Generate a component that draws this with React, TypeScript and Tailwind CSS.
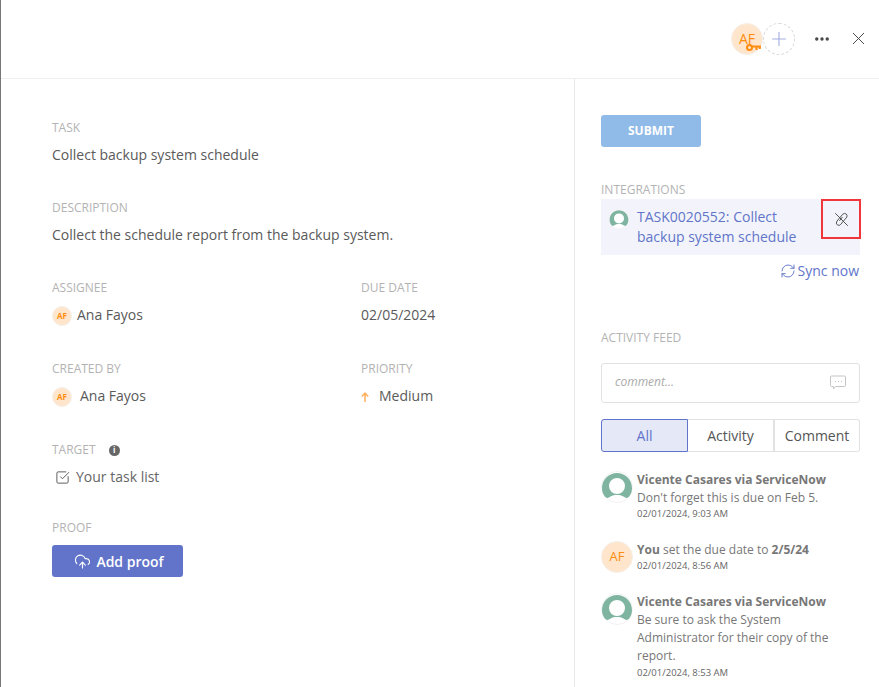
import { CloudUpload, MoreHorizontal, Plus, RefreshCw, SquareCheckBig, X } from 'lucide-react';
import type { ReactNode } from 'react';

function Label({ children }: { children: ReactNode }) {
  return <div className="h-4 text-[12px] leading-4 text-[#b3b3b3] uppercase">{children}</div>;
}

function Initials({ size }: { size: 'sm' | 'md' | 'lg' }) {
  const cls = {
    sm: 'mt-[1px] h-5 w-5 text-[8px] font-bold',
    md: 'h-8 w-8 text-[13px]',
    lg: 'h-8 w-8 text-[14px]',
  }[size];
  return (
    <div className={`flex shrink-0 items-center justify-center rounded-full border border-[#f5f0ea] bg-[#fee5cc] text-[#ff8c0f] ${cls}`}>
      AF
    </div>
  );
}

function SnowAvatar({ size }: { size: number }) {
  return (
    <svg width={size} height={size} viewBox="0 0 32 32" className="shrink-0">
      <circle cx="16" cy="16" r="15.5" fill="#fff" stroke="#f2f2f2" />
      <path
        fill="#7fb5a0"
        fillRule="evenodd"
        d="M16 2C8 2 1 8.500 1 17c0 3.500 1.100 6.300 3 8.800 1 1.300 3 1.500 4.300.5C10.500 24.600 13 24 16 24s5.500.6 7.700 2.300c1.300 1 3.300.8 4.300-.5 1.900-2.500 3-5.300 3-8.800C31 8.500 24 2 16 2zm0 21a8 8 0 1 1 0-16 8 8 0 0 1 0 16z"
      />
    </svg>
  );
}

function FeedItem({ avatar, children, time }: { avatar: ReactNode; children: ReactNode; time: string }) {
  return (
    <div className="flex gap-[4px]">
      {avatar}
      <div className="min-w-0">
        <div className="text-[12px] leading-[18.200px] text-[#777]">{children}</div>
        <div className="text-[9.500px] leading-[14px] text-[#666]">{time}</div>
      </div>
    </div>
  );
}

export default function App() {
  return (
    <div className="h-[687px] w-[879px] overflow-hidden border-l border-[#777] bg-white font-['Open_Sans',sans-serif] text-[#5a5a5a]">
      <header className="flex h-[79px] items-center border-b border-[#eee] pb-[1px] pl-[730px]">
        <div className="relative">
          <Initials size="lg" />
          <svg width="15" height="9" viewBox="0 0 15 9" className="absolute right-[2px] bottom-[3px]" fill="none" stroke="#ff8c0f" strokeWidth="2">
            <circle cx="3.500" cy="4.500" r="2.500" />
            <path d="M6 3.500h9M10.500 3.500V7M13.800 3.500V6" />
          </svg>
        </div>
        <div className="flex h-8 w-8 items-center justify-center rounded-full border border-dashed border-[#d9d9d9] bg-white">
          <Plus size={22} strokeWidth={1.200} className="text-[#a3acdf]" />
        </div>
        <MoreHorizontal size={18} strokeWidth={2.500} className="ml-[18px] text-[#444]" />
        <X size={21} strokeWidth={1.100} className="ml-[17px] text-[#444]" />
      </header>

      <div className="flex">
        <main className="h-[608px] w-[574px] border-r border-[#e8e8e8] pt-[41px] pl-[51px]">
          <Label>Task</Label>
          <div className="mt-[9px] h-[20px] text-[14px] leading-5">Collect backup system schedule</div>

          <div className="mt-[35px]">
            <Label>Description</Label>
            <div className="mt-[9px] h-[20px] text-[14px] leading-5">Collect the schedule report from the backup system.</div>
          </div>

          <div className="mt-[35px] grid grid-cols-[309px_1fr] gap-y-[36px]">
            <div className="h-[45px]">
              <Label>Assignee</Label>
              <div className="mt-[9px] flex h-[20px] items-center gap-[5px] text-[14px] leading-5">
                <Initials size="sm" />
                Ana Fayos
              </div>
            </div>
            <div className="h-[45px]">
              <Label>Due date</Label>
              <div className="mt-[9px] h-[20px] text-[14px] leading-5">02/05/2024</div>
            </div>
            <div className="h-[45px]">
              <Label>Created by</Label>
              <div className="mt-[9px] flex h-[20px] items-center gap-[8px] text-[14px] leading-5">
                <Initials size="sm" />
                Ana Fayos
              </div>
            </div>
            <div className="h-[45px]">
              <Label>Priority</Label>
              <div className="mt-[9px] flex h-[20px] items-center gap-[10px] text-[14px] leading-5">
                <svg width="8" height="10" viewBox="0 0 8 10" fill="none" stroke="#ffb05c" strokeWidth="1.500" className="mt-[2px]">
                  <path d="M4 10V1.500M.8 4.500 4 1.200l3.200 3.300" />
                </svg>
                Medium
              </div>
            </div>
          </div>

          <div className="mt-[36px]">
            <div className="flex items-center gap-[13px]">
              <Label>Target</Label>
              <div className="flex h-[11px] w-[11px] items-center justify-center rounded-full bg-[#666] text-[8px] leading-none font-bold text-white">i</div>
            </div>
            <div className="mt-[9px] flex h-[20px] items-center gap-[6px] pl-[3px] text-[14px] leading-5 text-[#666]">
              <SquareCheckBig size={15} strokeWidth={1.500} className="text-[#555]" />
              Your task list
            </div>
          </div>

          <div className="mt-[33px]">
            <Label>Proof</Label>
            <button className="mt-[9px] flex h-8 w-[131px] items-center justify-center gap-[5px] rounded-[3px] bg-[#6174c9] pl-[3px] text-[14px] font-semibold text-white">
              <CloudUpload size={17} strokeWidth={1.600} />
              Add proof
            </button>
          </div>
        </main>

        <aside className="w-[304px] pt-[36px] pl-[26px]">
          <button className="h-8 w-[100px] rounded-[3px] bg-[#90bae7] text-[12px] font-bold text-white">SUBMIT</button>

          <div className="mt-[35px] w-[259px]">
            <Label>Integrations</Label>
            <div className="relative mt-[1px] flex h-[56px] bg-[#f3f4fb] pt-[8px] pl-[8px]">
              <div className="pt-[2px]">
                <SnowAvatar size={20} />
              </div>
              <div className="ml-[8px] w-[180px] text-[14px] leading-5 text-[#6174c9]">TASK0020552: Collect backup system schedule</div>
              <div className="absolute top-0 right-[-1px] flex h-[40px] w-[40px] items-center justify-center border-2 border-[#f0353b]">
                <svg width="15" height="15" viewBox="0 0 15 15" fill="none" stroke="#555" strokeWidth="1" strokeLinecap="round">
                  <path d="M9 2a2.500 2.500 0 0 1 3.800 3.100L6.800 12.300a2.500 2.500 0 0 1-4-3z" />
                  <path d="M8.200 5.300 5.700 8.500" />
                  <path d="M1.500 1.500 13.500 13.500" />
                </svg>
              </div>
            </div>
            <div className="mt-[6px] flex h-5 items-center justify-end gap-[2px] pr-[1px] text-[14px] leading-5 text-[#6174c9]">
              <RefreshCw size={16} strokeWidth={1.400} />
              Sync now
            </div>
          </div>

          <div className="mt-[49px] w-[259px]">
            <Label>Activity feed</Label>
            <div className="mt-[17px] flex h-[40px] items-center justify-between rounded-[3px] border border-[#e2e2e2] pr-[13px] pb-[2px] pl-[13px]">
              <span className="text-[12px] text-[#aaa] italic">comment...</span>
              <svg width="16" height="15" viewBox="0 0 16 15" fill="none" stroke="#c4c4c4">
                <path d="M1.500 1h13a1 1 0 0 1 1 1v8.500a1 1 0 0 1-1 1h-9l-2 2.500v-2.500h-2a1 1 0 0 1-1-1V2a1 1 0 0 1 1-1z" />
                <path d="M5 6.500h1M8 6.500h1M11 6.500h1" />
              </svg>
            </div>

            <div className="mt-[16px] flex h-[33px] text-[14px]">
              <div className="flex w-[87px] items-center justify-center rounded-l-[3px] border border-[#6174c9] bg-[#e5e8f7] text-[#6174c9]">All</div>
              <div className="flex w-[87px] items-center justify-center border-y border-r-2 border-[#e2e2e2] text-[#555]">Activity</div>
              <div className="flex w-[85px] items-center justify-center rounded-r-[3px] border-y border-r border-[#e2e2e2] text-[#555]">Comment</div>
            </div>

            <div className="mt-[19px] flex flex-col gap-[19.600px]">
              <FeedItem avatar={<SnowAvatar size={32} />} time="02/01/2024, 9:03 AM">
                <b className="font-bold">Vicente Casares via ServiceNow</b>
                <br />
                Don't forget this is due on Feb 5.
              </FeedItem>
              <FeedItem avatar={<Initials size="md" />} time="02/01/2024, 8:56 AM">
                <b className="font-bold">You</b> set the due date to <b className="font-bold">2/5/24</b>
              </FeedItem>
              <FeedItem avatar={<SnowAvatar size={32} />} time="02/01/2024, 8:53 AM">
                <b className="font-bold">Vicente Casares via ServiceNow</b>
                <br />
                Be sure to ask the System Administrator for their copy of the report.
              </FeedItem>
            </div>
          </div>
        </aside>
      </div>
    </div>
  );
}
